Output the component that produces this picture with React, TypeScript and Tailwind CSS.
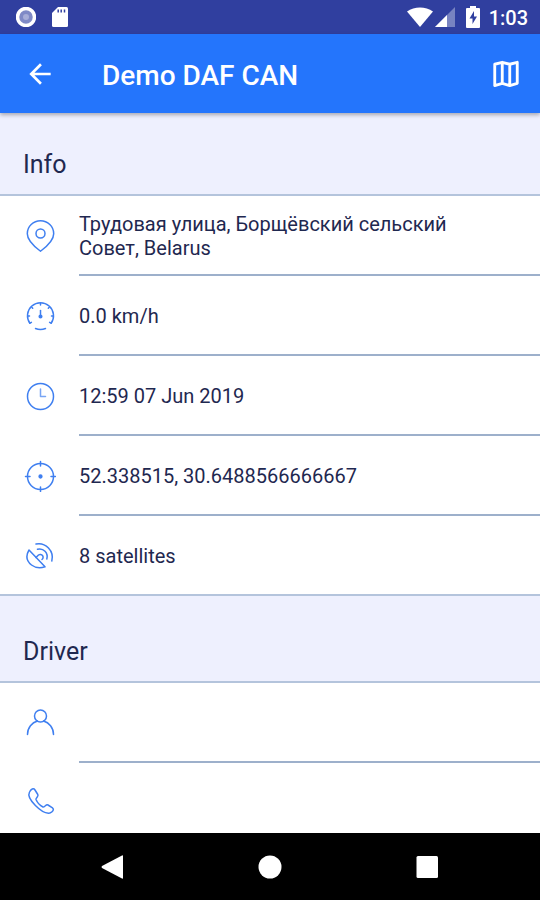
import type { ReactNode } from "react";

const stroke = {
  fill: "none",
  stroke: "currentColor",
  strokeWidth: 1.5,
  strokeLinecap: "round" as const,
  strokeLinejoin: "round" as const,
};

function Icon({ children }: { children: ReactNode }) {
  return (
    <svg className="size-8 text-[#3f7ff0]" viewBox="0 0 32 32" aria-hidden="true" {...stroke}>
      {children}
    </svg>
  );
}

const PinIcon = () => (
  <Icon>
    <path d="M16.500 31.200C13 28.500 3.300 21.500 3.300 13.700a13.200 12.900 0 0 1 26.400 0C29.700 21.500 20 28.500 16.500 31.200Z" />
    <circle cx="16.500" cy="13.500" r="4.500" />
  </Icon>
);

const SpeedIcon = () => (
  <Icon>
    <path d="M5.900 23.200A13 13 0 1 1 27.100 23.200" />
    <path d="M11.500 28.500a13 13 0 0 0 10 0" />
    <path d="M16.500 3.500v1.500M4 16h1.500M27.500 16h1.500M7.800 7.300l.9.900M25.200 7.300l-.9.900M5.900 23.200l1.500-.9M27.100 23.200l-1.500-.9" />
    <path d="M16.500 10.500v4" />
    <circle cx="16.500" cy="16.500" r="1.300" fill="currentColor" />
  </Icon>
);

const ClockIcon = () => (
  <Icon>
    <circle cx="16.500" cy="16.500" r="13" />
    <path d="M16.500 9v7.500h5" opacity="0.7" />
  </Icon>
);

const TargetIcon = () => (
  <Icon>
    <circle cx="16.500" cy="16.500" r="13" />
    <path d="M16.500 1.500v4.500M16.500 27v4.500M1.500 16.500h4.500M27 16.500h4.500" />
    <circle cx="16.500" cy="16.500" r="1.400" fill="currentColor" />
  </Icon>
);

const SatelliteIcon = () => (
  <Icon>
    <path d="M5 11C1.500 17 3 22.500 7.500 26c4 3 9 3.200 13.500 1.800Z" />
    <path d="M12 18.500l2.500-2.500a2.800 2.800 0 1 1 3.500 4.500" />
    <path d="M13.500 10.200c6-1.500 11 3.500 9.300 9.800" />
    <path d="M12 5C21.500 3 30.500 12 27.800 22" />
  </Icon>
);

const PersonIcon = () => (
  <Icon>
    <circle cx="16.500" cy="9" r="6" />
    <path d="M3.500 27.500C3.500 20.500 8 15.500 13.500 14M29.500 27.500C29.500 20.500 25 15.500 19.500 14" />
  </Icon>
);

const PhoneIcon = () => (
  <Icon>
    <path d="M5.500 6C7 3 9.500 1.800 11 4l2.800 4.500c1.200 2-2.300 3.500-1.800 5 1.300 3 4 6 7 7.500 1.500.5 3-3 5-2l4.500 2.800c2 1.500.3 4-2.700 5.200C18 28.500 2 12.500 5.500 6Z" />
  </Icon>
);

const info = [
  { icon: <PinIcon />, label: "Address", text: "Трудовая улица, Борщёвский сельский Совет, Belarus" },
  { icon: <SpeedIcon />, label: "Speed", text: "0.0 km/h" },
  { icon: <ClockIcon />, label: "Time", text: "12:59 07 Jun 2019" },
  { icon: <TargetIcon />, label: "Coordinates", text: "52.338515, 30.6488566666667" },
  { icon: <SatelliteIcon />, label: "Satellites", text: "8 satellites" },
];

const driver = [
  { icon: <PersonIcon />, label: "Driver name", text: "" },
  { icon: <PhoneIcon />, label: "Driver phone", text: "" },
];

function Section({ title, rows }: { title: string; rows: typeof info }) {
  return (
    <section>
      <h2 className="border-b-2 border-[#b4c4dc] bg-[#eef0fe] px-[23px] pt-10 pb-[13px] text-[25px] leading-8 text-[#1f2850]">
        {title}
      </h2>
      <ul>
        {rows.map((row) => (
          <li key={row.label} className="group flex h-20 pl-6 last:border-b-2 last:border-[#b4c4dc]">
            <div className="flex w-[55px] shrink-0 items-center">{row.icon}</div>
            <div className="flex flex-1 items-center border-b-2 border-[#9db0cb] pt-0.5 pr-20 group-last:border-b-0">
              <p className="text-xl leading-6 text-[#1f2850]">{row.text}</p>
            </div>
          </li>
        ))}
      </ul>
    </section>
  );
}

export default function App() {
  return (
    <div className="flex h-screen flex-col overflow-hidden bg-white font-[Roboto,sans-serif]">
      <div className="flex h-[34px] shrink-0 items-center bg-[#303f9f] pr-3 pl-4 text-white">
        <svg className="size-5" viewBox="0 0 20 20" aria-hidden="true">
          <circle cx="10" cy="10" r="8.500" fill="#7f8ac6" stroke="#fff" strokeWidth="3.500" />
          <circle cx="10" cy="10" r="3" fill="#a7aed8" />
        </svg>
        <svg className="ml-3 size-6" viewBox="0 0 24 24" aria-hidden="true">
          <path d="M10 2h8.500a1.500 1.500 0 0 1 1.500 1.500v17a1.500 1.500 0 0 1-1.500 1.500h-13A1.500 1.500 0 0 1 4 20.500V8Z" fill="#fff" />
          <path d="M10.200 4.500v3M13.200 4.500v3M16.500 4.500v3" stroke="#303f9f" strokeWidth="1.500" />
        </svg>
        <div className="ml-auto flex items-center">
          <svg className="h-5 w-[26px]" viewBox="0 0 26 20" aria-hidden="true">
            <path d="M0 4.500C7.500-1 18.500-1 26 4.500L13 20Z" fill="#fff" />
          </svg>
          <svg className="ml-0.5 size-5" viewBox="0 0 20 20" aria-hidden="true">
            <path d="M20 0v20H0Z" fill="#7883c1" />
            <path d="M12 8v12H0Z" fill="#fff" />
          </svg>
          <svg className="ml-2.5 h-[22px] w-4" viewBox="0 0 16 22" aria-hidden="true">
            <path d="M5 0h6v2h3q1 0 1 1v18q0 1-1 1H2q-1 0-1-1V3q0-1 1-1h3Z" fill="#fff" />
            <path d="M9 5 4.500 12.500h3V18l4.500-7.500H9Z" fill="#303f9f" />
          </svg>
          <span className="ml-2 pt-0.5 text-xl leading-6 font-medium">1:03</span>
        </div>
      </div>

      <header className="z-10 flex h-[79px] shrink-0 items-center bg-[#2475fc] pr-4 pl-6 text-white shadow-[0_2px_4px_rgba(0,0,0,0.3)]">
        <button type="button" aria-label="Back" className="size-8">
          <svg viewBox="0 0 24 24" fill="currentColor" aria-hidden="true">
            <path d="M20 11H7.830l5.590-5.590L12 4l-8 8 8 8 1.410-1.410L7.830 13H20z" />
          </svg>
        </button>
        <h1 className="ml-[46px] flex-1 pt-1 text-[28px] leading-8 font-medium">Demo DAF CAN</h1>
        <button type="button" aria-label="Map" className="size-9">
          <svg viewBox="0 0 24 24" fill="none" stroke="currentColor" strokeWidth="1.900" strokeLinejoin="round" aria-hidden="true">
            <path d="M4.500 5.500 9.500 4.200l5 1.300L19.500 4.200v14L14.500 19.700l-5-1.500L4.500 19.700ZM9.500 4.200v14M14.500 5.500V19.700" />
          </svg>
        </button>
      </header>

      <main className="-mt-1 min-h-0 flex-1 overflow-hidden">
        <Section title="Info" rows={info} />
        <Section title="Driver" rows={driver} />
      </main>

      <nav className="z-10 flex h-[67px] shrink-0 items-center justify-center gap-[133px] bg-black text-white">
        <button type="button" aria-label="Navigate back" className="size-6">
          <svg viewBox="0 0 24 24" fill="currentColor" aria-hidden="true">
            <path d="M22 1v22q0 1-1 .5L1 13q-1-1 0-2L21 .5q1-.5 1 .5Z" />
          </svg>
        </button>
        <button type="button" aria-label="Home" className="size-6">
          <svg viewBox="0 0 24 24" fill="currentColor" aria-hidden="true">
            <circle cx="12" cy="12" r="11.500" />
          </svg>
        </button>
        <button type="button" aria-label="Recent apps" className="size-6">
          <svg viewBox="0 0 24 24" fill="currentColor" aria-hidden="true">
            <rect x="1.500" y="1" width="21.500" height="22" rx="1.500" />
          </svg>
        </button>
      </nav>
    </div>
  );
}
